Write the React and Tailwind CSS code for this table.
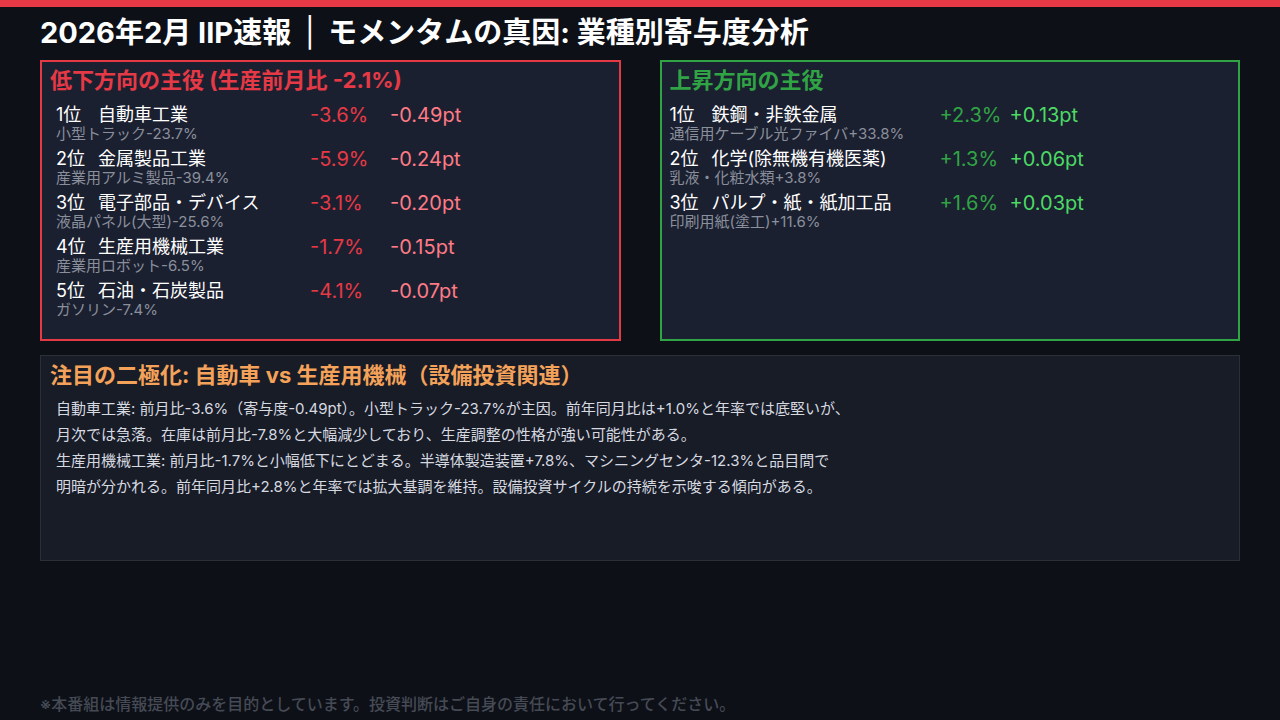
const down = [
  { rank: '1位', name: '自動車工業', sub: '小型トラック-23.7%', pct: '-3.6%', pt: '-0.49pt' },
  { rank: '2位', name: '金属製品工業', sub: '産業用アルミ製品-39.4%', pct: '-5.9%', pt: '-0.24pt' },
  { rank: '3位', name: '電子部品・デバイス', sub: '液晶パネル(大型)-25.6%', pct: '-3.1%', pt: '-0.20pt' },
  { rank: '4位', name: '生産用機械工業', sub: '産業用ロボット-6.5%', pct: '-1.7%', pt: '-0.15pt' },
  { rank: '5位', name: '石油・石炭製品', sub: 'ガソリン-7.4%', pct: '-4.1%', pt: '-0.07pt' },
];

const up = [
  { rank: '1位', name: '鉄鋼・非鉄金属', sub: '通信用ケーブル光ファイバ+33.8%', pct: '+2.3%', pt: '+0.13pt' },
  { rank: '2位', name: '化学(除無機有機医薬)', sub: '乳液・化粧水類+3.8%', pct: '+1.3%', pt: '+0.06pt' },
  { rank: '3位', name: 'パルプ・紙・紙加工品', sub: '印刷用紙(塗工)+11.6%', pct: '+1.6%', pt: '+0.03pt' },
];

function Row({ r, nameW, pctW, pctColor, ptColor }) {
  return (
    <div className="h-[44px]">
      <div className="flex items-center h-[20px] leading-[20px]">
        <div className={nameW + ' flex text-[18px] text-white'}>
          <span className="w-[42px]">{r.rank}</span>
          <span>{r.name}</span>
        </div>
        <span className={pctW + ' text-[20px] ' + pctColor}>{r.pct}</span>
        <span className={'text-[20px] ' + ptColor}>{r.pt}</span>
      </div>
      <div className="text-[15px] leading-[18px] text-[#8a8f9c]">{r.sub}</div>
    </div>
  );
}

export default function App() {
  return (
    <div
      className="w-[1280px] h-[720px] bg-[#0d1017] flex flex-col overflow-hidden"
      style={{ fontFamily: 'Inter, "Noto Sans CJK JP", sans-serif' }}
    >
      <div className="h-[7px] bg-[#e63946] shrink-0" />
      <div className="px-10 flex flex-col flex-1">
        <h1 className="text-[29px] leading-[38px] font-bold text-white mt-[7px] whitespace-pre">
          2026年2月 IIP速報  <span className="font-normal">|</span>  モメンタムの真因: 業種別寄与度分析
        </h1>

        <div className="flex gap-[39px] mt-[8px]">
          <div className="w-[581px] h-[281px] border-2 border-[#e63946] bg-[#1b2030] pl-[14px] pr-2 pt-[3px]">
            <h2 className="text-[22px] leading-[30px] font-bold text-[#e63946] -ml-[6px] whitespace-pre">
              低下方向の主役 (生産前月比 -2.1%)
            </h2>
            <div className="mt-[10px]">
              {down.map(r => (
                <Row key={r.rank} r={r} nameW="w-[254px]" pctW="w-[80px]" pctColor="text-[#e63946]" ptColor="text-[#ff7b86]" />
              ))}
            </div>
          </div>

          <div className="w-[581px] h-[281px] border-2 border-[#30a444] bg-[#1b2030] pl-[8px] pr-2 pt-[3px]">
            <h2 className="text-[22px] leading-[30px] font-bold text-[#30a444]">上昇方向の主役</h2>
            <div className="mt-[10px]">
              {up.map(r => (
                <Row key={r.rank} r={r} nameW="w-[270px]" pctW="w-[70px]" pctColor="text-[#30a444]" ptColor="text-[#4cd964]" />
              ))}
            </div>
          </div>
        </div>

        <div className="mt-[14px] h-[206px] border border-[#2b2f38] bg-[#181c26] px-[9px] pt-[4px]">
          <h2 className="text-[22px] leading-[30px] font-bold text-[#f4a259]">
            注目の二極化: 自動車 vs 生産用機械（設備投資関連）
          </h2>
          <div className="text-[15px] leading-[26px] text-[#d6d9e0] pl-[6px] mt-[6px]">
            <p>自動車工業: 前月比-3.6%（寄与度-0.49pt）。小型トラック-23.7%が主因。前年同月比は+1.0%と年率では底堅いが、</p>
            <p>月次では急落。在庫は前月比-7.8%と大幅減少しており、生産調整の性格が強い可能性がある。</p>
            <p>生産用機械工業: 前月比-1.7%と小幅低下にとどまる。半導体製造装置+7.8%、マシニングセンタ-12.3%と品目間で</p>
            <p>明暗が分かれる。前年同月比+2.8%と年率では拡大基調を維持。設備投資サイクルの持続を示唆する傾向がある。</p>
          </div>
        </div>

        <div className="mt-auto mb-[5px] text-[16px] leading-[22px] font-medium text-[#454a55]">
          ※本番組は情報提供のみを目的としています。投資判断はご自身の責任において行ってください。
        </div>
      </div>
    </div>
  );
}
